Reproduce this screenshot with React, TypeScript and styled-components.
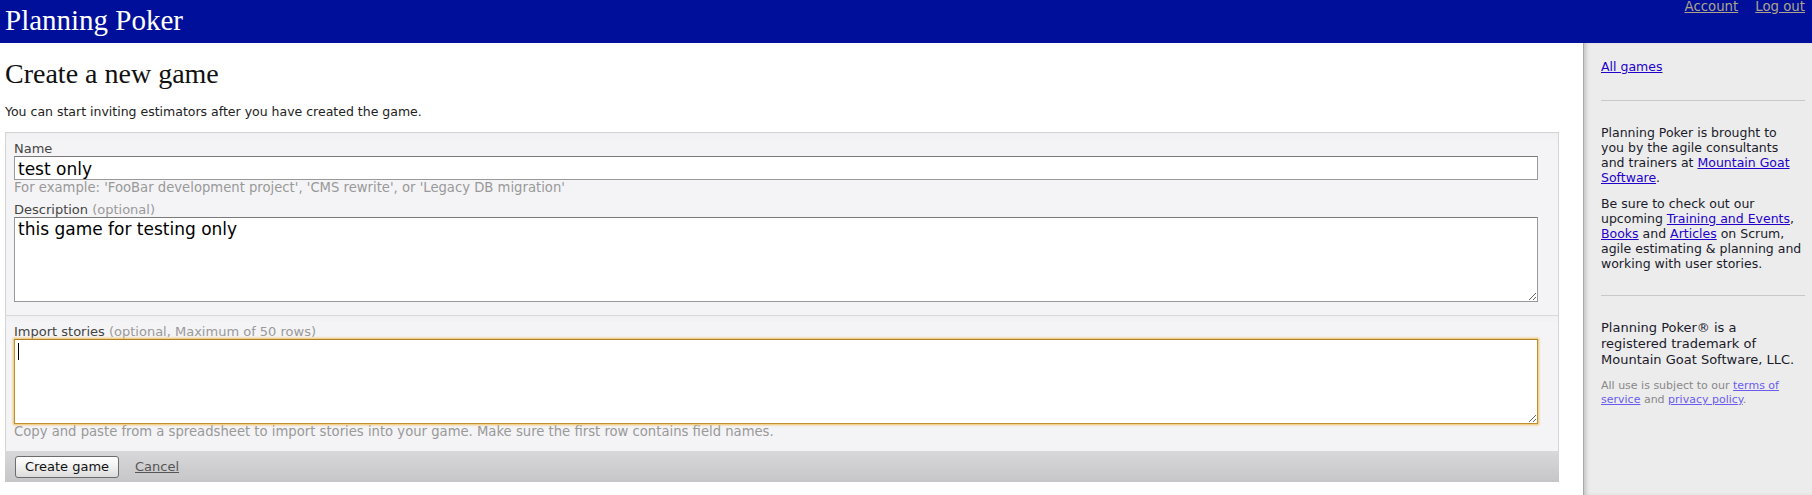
import React from 'react';
import styled, { createGlobalStyle } from 'styled-components';

const GlobalStyle = createGlobalStyle`
  html, body {
    margin: 0;
    padding: 0;
    background: #fff;
  }
  body {
    font-family: "DejaVu Sans", Verdana, sans-serif;
    color: #222;
  }
`;

const Page = styled.div`
  display: flex;
  flex-direction: column;
  min-height: 100vh;
`;

const Header = styled.header`
  display: flex;
  justify-content: space-between;
  align-items: flex-start;
  height: 43px;
  background: #000f9a;
  padding: 0 7px 0 5px;
  box-sizing: border-box;
`;

const Brand = styled.h1`
  margin: 0;
  font-family: "Liberation Serif", "Times New Roman", serif;
  font-weight: normal;
  font-size: 29px;
  line-height: 41px;
  color: #fff;
`;

const HeaderNav = styled.nav`
  display: flex;
  gap: 17px;
  font-size: 13.3px;
  line-height: 14px;
`;

const HeaderLink = styled.a`
  color: #aca48a;
  text-decoration: underline;
`;

const Body = styled.div`
  display: flex;
  flex: 1;
`;

const Main = styled.main`
  flex: 1;
  padding: 0 24px 12px 5px;
`;

const Title = styled.h2`
  margin: 14px 0 0;
  font-family: "Liberation Serif", "Times New Roman", serif;
  font-weight: normal;
  font-size: 28px;
  line-height: 34px;
  color: #111;
`;

const Intro = styled.p`
  margin: 13px 0 12px;
  font-size: 12.5px;
  line-height: 16px;
  color: #222;
`;

const FormBox = styled.form`
  background: #f4f4f6;
`;

const Section = styled.div<{ $first?: boolean }>`
  border: 1px solid #d4d4d4;
  border-bottom: none;
  border-top-color: ${(p) => (p.$first ? '#d4d4d4' : '#d8d8d8')};
  background: linear-gradient(#f0f0f2, #f4f4f6 8px);
  padding: ${(p) => (p.$first ? '8px 20px 13px 8px' : '8px 20px 12px 8px')};
`;

const Label = styled.label`
  display: block;
  font-size: 13px;
  line-height: 15px;
  color: #444;
`;

const Optional = styled.span`
  color: #999;
`;

const TextInput = styled.input`
  display: block;
  width: 100%;
  box-sizing: border-box;
  height: 24px;
  margin: 0;
  padding: 1px 3px 0;
  border: 1px solid #999;
  border-top-color: #7a7a7a;
  background: #fff;
  font-family: "DejaVu Sans", Verdana, sans-serif;
  font-size: 17px;
  color: #000;
  outline: none;
`;

const TextArea = styled.textarea<{ $focused?: boolean }>`
  display: block;
  width: 100%;
  box-sizing: border-box;
  height: 85px;
  margin: 0;
  padding: 1px 3px;
  border: 1px solid ${(p) => (p.$focused ? '#c09030' : '#999')};
  border-top-color: ${(p) => (p.$focused ? '#b08028' : '#7a7a7a')};
  box-shadow: ${(p) => (p.$focused ? '0 0 2px 1px #f0c060' : 'none')};
  background: #fff;
  font-family: "DejaVu Sans", Verdana, sans-serif;
  font-size: 17px;
  line-height: 20px;
  color: #000;
  outline: none;
`;

const FieldWrap = styled.div`
  position: relative;
`;

const Caret = styled.span`
  position: absolute;
  left: 4px;
  top: 4px;
  width: 1px;
  height: 17px;
  background: #000;
`;

const Hint = styled.div`
  font-size: 13.2px;
  line-height: 15px;
  color: #999;
`;

const Spacer = styled.div<{ $h: number }>`
  height: ${(p) => p.$h}px;
`;

const Footer = styled.div`
  display: flex;
  align-items: center;
  gap: 16px;
  height: 31px;
  padding: 0 10px;
  background: linear-gradient(#d8d8da, #c6c6c8);
`;

const Button = styled.button`
  height: 22px;
  width: 104px;
  padding: 0;
  border: 1px solid #6c6c6c;
  border-radius: 3px;
  background: linear-gradient(#ffffff, #f2f2f2 45%, #dcdcdc);
  font-family: "DejaVu Sans", Verdana, sans-serif;
  font-size: 13px;
  color: #111;
`;

const CancelLink = styled.a`
  font-size: 13px;
  color: #555;
  text-decoration: underline;
`;

const Sidebar = styled.aside`
  width: 229px;
  box-sizing: border-box;
  flex-shrink: 0;
  background: #ececec;
  border-left: 1px solid #a8a8a8;
  box-shadow: inset 4px 0 4px -2px rgba(0, 0, 0, 0.18);
  padding: 16px 10px 20px 17px;
`;

const SideLink = styled.a<{ $light?: boolean }>`
  color: ${(p) => (p.$light ? '#6a5cf0' : '#2200cc')};
  text-decoration: underline;
`;

const SideText = styled.p<{ $size?: number; $lh?: number }>`
  margin: 0 0 11px;
  font-size: ${(p) => p.$size ?? 12.5}px;
  line-height: ${(p) => p.$lh ?? 15}px;
  color: #1a1a2a;
`;

const Fine = styled.p`
  margin: 2px 0 0;
  font-size: 11px;
  line-height: 14px;
  color: #888;
`;

const Rule = styled.hr`
  border: none;
  border-top: 1px solid #c8c8c8;
  margin: 0 -3px 0 0;
`;

export default function App() {
  return (
    <Page>
      <GlobalStyle />
      <Header>
        <Brand>Planning Poker</Brand>
        <HeaderNav>
          <HeaderLink href="#">Account</HeaderLink>
          <HeaderLink href="#">Log out</HeaderLink>
        </HeaderNav>
      </Header>
      <Body>
        <Main>
          <Title>Create a new game</Title>
          <Intro>You can start inviting estimators after you have created the game.</Intro>
          <FormBox onSubmit={(e) => e.preventDefault()}>
            <Section $first>
              <Label>Name</Label>
              <TextInput defaultValue="test only" />
              <Hint>For example: 'FooBar development project', 'CMS rewrite', or 'Legacy DB migration'</Hint>
              <Spacer $h={7} />
              <Label>
                Description <Optional>(optional)</Optional>
              </Label>
              <TextArea defaultValue="this game for testing only" />
            </Section>
            <Section>
              <Label>
                Import stories <Optional>(optional, Maximum of 50 rows)</Optional>
              </Label>
              <FieldWrap>
                <TextArea $focused defaultValue="" />
                <Caret />
              </FieldWrap>
              <Hint>
                Copy and paste from a spreadsheet to import stories into your game. Make sure the first row contains field names.
              </Hint>
            </Section>
            <Footer>
              <Button type="submit">Create game</Button>
              <CancelLink href="#">Cancel</CancelLink>
            </Footer>
          </FormBox>
        </Main>
        <Sidebar>
          <SideText $size={12.5}>
            <SideLink href="#">All games</SideLink>
          </SideText>
          <Spacer $h={15} />
          <Rule />
          <Spacer $h={24} />
          <SideText>
            Planning Poker is brought to you by the agile consultants and trainers at{' '}
            <SideLink href="#">Mountain Goat Software</SideLink>.
          </SideText>
          <SideText>
            Be sure to check out our upcoming <SideLink href="#">Training and Events</SideLink>,{' '}
            <SideLink href="#">Books</SideLink> and <SideLink href="#">Articles</SideLink> on Scrum, agile
            estimating &amp; planning and working with user stories.
          </SideText>
          <Spacer $h={13} />
          <Rule />
          <Spacer $h={24} />
          <SideText $size={13} $lh={16}>
            Planning Poker® is a registered trademark of Mountain Goat Software, LLC.
          </SideText>
          <Fine>
            All use is subject to our <SideLink $light href="#">terms of service</SideLink> and{' '}
            <SideLink $light href="#">privacy policy</SideLink>.
          </Fine>
        </Sidebar>
      </Body>
    </Page>
  );
}
